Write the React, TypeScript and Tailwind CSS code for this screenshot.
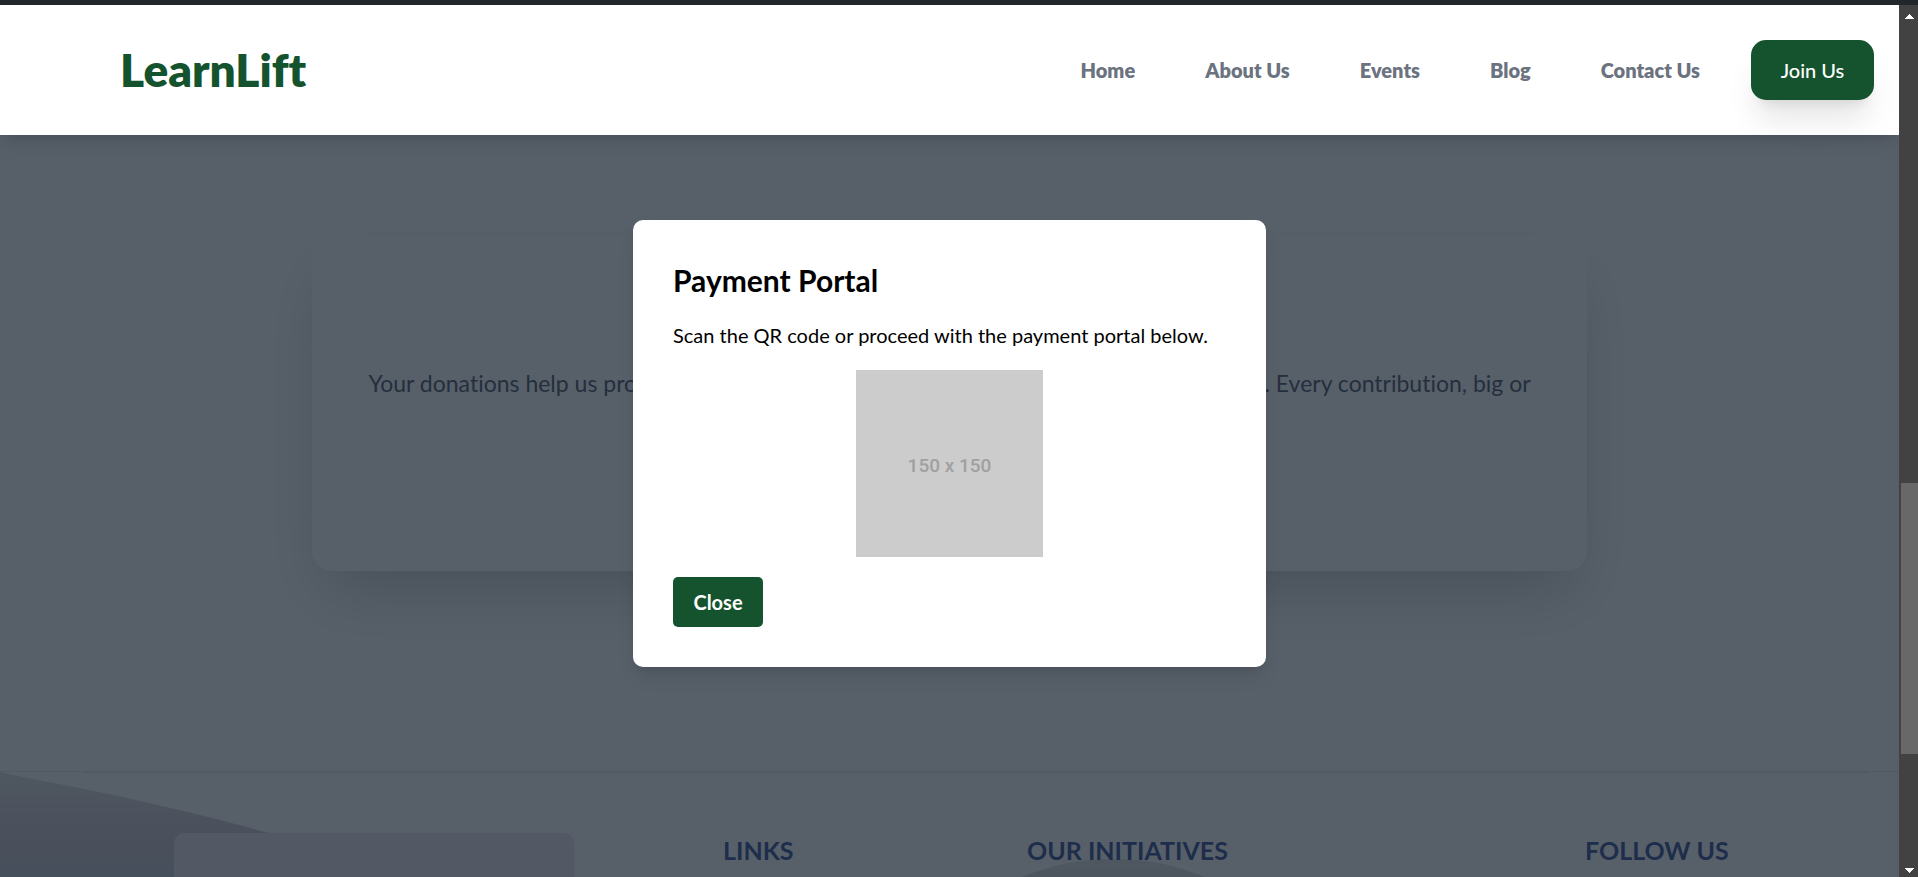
import { useState } from "react";

const navLinks = ["Home", "About Us", "Events", "Blog", "Contact Us"];

function Header() {
  return (
    <header className="relative z-20 flex h-[130px] shrink-0 items-center bg-white pr-[25px] pl-[120px] shadow-[0_12px_19px_-4px_rgba(0,0,0,0.1),0_5px_8px_-5px_rgba(0,0,0,0.1)]">
      <a href="#home" className="text-[46px] leading-[50px] font-extrabold text-[#14532d]">
        LearnLift
      </a>
      <nav className="ml-auto flex items-center gap-[70px] text-xl font-extrabold text-[#6b7280]">
        {navLinks.map((label) => (
          <a key={label} href={"#" + label.toLowerCase().replace(" ", "-")}>
            {label}
          </a>
        ))}
      </nav>
      <button
        type="button"
        className="ml-[51px] h-[60px] w-[123px] rounded-[15px] bg-[#14532d] text-xl font-medium text-white shadow-[0_25px_31px_-6px_rgba(0,0,0,0.1),0_10px_12px_-8px_rgba(0,0,0,0.1)]"
      >
        Join Us
      </button>
    </header>
  );
}

function DonationCard() {
  return (
    <section className="px-[312px] pt-[101px] pb-[200px]">
      <div className="rounded-[20px] bg-white px-[50px] pt-[130px] pb-[135px] text-center shadow-[0_31px_62px_-15px_rgba(0,0,0,0.25)]">
        <p className="text-[23px] leading-[35px] text-[#374151]">
          Your donations help us provide quality education and useful resources to children in need. Every contribution,
          big or small, makes a difference.
        </p>
      </div>
    </section>
  );
}

function Footer() {
  return (
    <footer className="relative flex-1 overflow-hidden border-t border-[#ebe6eb]">
      <div className="mr-[30px] ml-[85px] h-px bg-[#ebe6eb]" />
      <svg
        className="absolute top-0 left-0 h-[400px] w-full"
        viewBox="0 0 1899 400"
        preserveAspectRatio="none"
        aria-hidden="true"
      >
        <defs>
          <linearGradient id="wave" x1="0" y1="0" x2="0" y2="1">
            <stop offset="0" stopColor="#dcdedc" />
            <stop offset="0.15" stopColor="#ccc4ca" />
            <stop offset="0.27" stopColor="#bbbfcb" />
            <stop offset="1" stopColor="#8290a8" />
          </linearGradient>
        </defs>
        <path fill="url(#wave)" d="M0 0 C50 11 95 18 140 29 C185 39 226 49 268 61 C420 105 600 190 760 400 H0 Z" />
        <path
          fill="url(#wave)"
          d="M760 400 C800 230 930 140 1022 105 C1052 93 1080 87 1113 87 C1148 87 1175 93 1205 105 C1350 165 1550 260 1899 280 V400 Z"
        />
      </svg>
      <div className="relative grid grid-cols-[549fr_304fr_558fr_314fr] pt-[60px] pl-[174px] text-[25px] leading-[34px] font-bold text-[#1e3a8a]">
        <div className="h-[300px] w-[400px] rounded-[10px] bg-[#ebe7eb]" />
        <h3>LINKS</h3>
        <h3>OUR INITIATIVES</h3>
        <h3>FOLLOW US</h3>
      </div>
    </footer>
  );
}

function PaymentDialog({ onClose }: { onClose: () => void }) {
  return (
    <div className="absolute inset-0 z-10 flex items-center justify-center bg-[#1f2937]/75 pt-[5px]">
      <div
        role="dialog"
        aria-labelledby="payment-title"
        className="w-1/3 rounded-[10px] bg-white p-10 text-black shadow-[0_12px_19px_-4px_rgba(0,0,0,0.1),0_5px_8px_-5px_rgba(0,0,0,0.1)]"
      >
        <h2 id="payment-title" className="mb-5 text-3xl leading-10 font-bold">
          Payment Portal
        </h2>
        <p className="mb-5 text-xl leading-[30px]">Scan the QR code or proceed with the payment portal below.</p>
        <div className="mx-auto mb-5 flex size-[187px] items-center justify-center bg-[#cccccc] pt-[5px] font-['Roboto',sans-serif] text-[19px] font-medium text-[#a0a0a0]">
          150 x 150
        </div>
        <button
          type="button"
          onClick={onClose}
          className="h-[50px] w-[90px] rounded-[5px] bg-[#14532d] text-xl font-bold text-white"
        >
          Close
        </button>
      </div>
    </div>
  );
}

function Scrollbar() {
  return (
    <div className="flex w-[19px] shrink-0 flex-col items-end bg-[#424242]" aria-hidden="true">
      <svg className="h-[19px] w-[19px]" viewBox="0 0 19 19" shapeRendering="crispEdges">
        <path fill="#fff" d="M6 14 L10.500 9 L15 14 Z" />
      </svg>
      <div className="grow-[459]" />
      <div className="w-[17px] grow-[271] bg-[#686868]" />
      <div className="grow-[104]" />
      <svg className="h-[19px] w-[19px]" viewBox="0 0 19 19" shapeRendering="crispEdges">
        <path fill="#fff" d="M6 10 L10.500 15 L15 10 Z" />
      </svg>
    </div>
  );
}

export default function App() {
  const [open, setOpen] = useState(true);
  return (
    <div className="flex h-screen flex-col overflow-hidden font-['Lato',sans-serif] [font-variant-ligatures:no-common-ligatures]">
      <div className="h-[5px] shrink-0 bg-[#22272c]" />
      <div className="flex min-h-0 flex-1">
        <div className="relative flex min-w-0 flex-1 flex-col overflow-hidden bg-white">
          <Header />
          <DonationCard />
          <Footer />
          {open && <PaymentDialog onClose={() => setOpen(false)} />}
        </div>
        <Scrollbar />
      </div>
    </div>
  );
}
